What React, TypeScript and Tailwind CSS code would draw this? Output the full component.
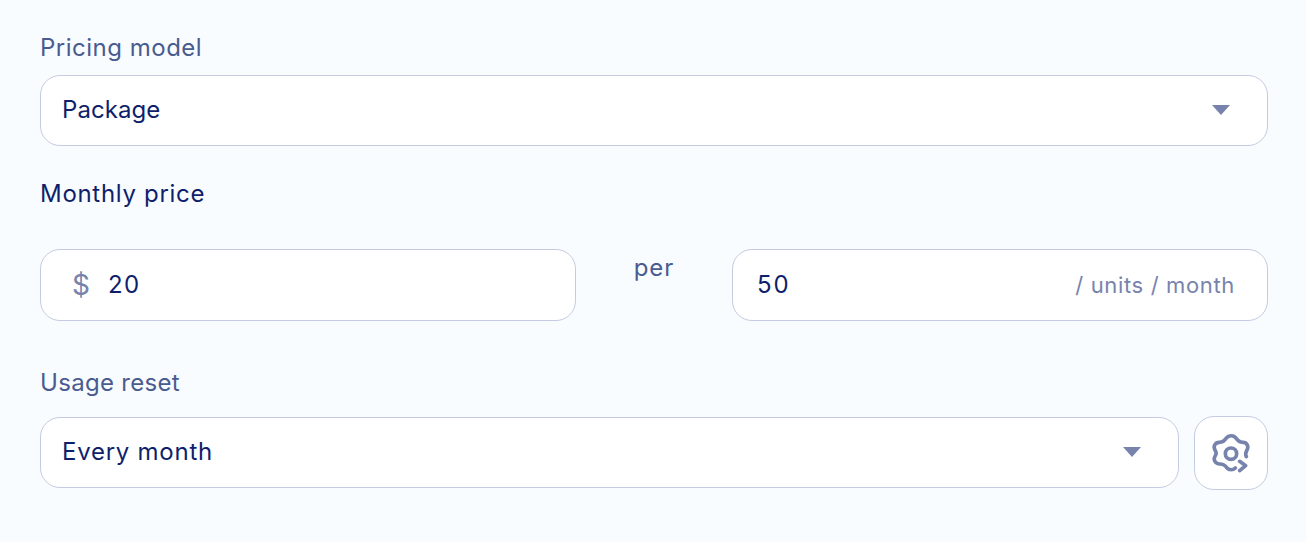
const font = "[font-family:Inter,'Liberation_Sans',sans-serif]"

const Caret = () => (
  <svg width="18" height="10" viewBox="0 0 18 10" className="shrink-0">
    <path d="M0 0H18L9 10Z" fill="#7783ad" />
  </svg>
)

const GearIcon = () => (
  <svg width="38.67" height="40" viewBox="95 85 116 120" fill="none" stroke="#7783ad" strokeWidth="11" strokeLinecap="round" strokeLinejoin="round">
    <path d="M165 190 C158 197 146 197 140 190 C135 182 128 178 118 178 C105 178 98 165 104 155 C108 150 110 145 104 136 C98 125 104 113 117 113 C128 113 133 108 138 100 C145 91 160 91 167 100 C172 108 177 113 188 113 C200 113 206 125 200 136 C195 145 195 150 198 156" />
    <circle cx="152" cy="147" r="17" />
    <path d="M178 170 L196 183 L178 198" />
  </svg>
)

const Box = ({ children, className }: { children: React.ReactNode; className: string }) => (
  <div className={`flex items-center rounded-[20px] border border-[#c5cbe2] bg-white ${className}`}>{children}</div>
)

export default function App() {
  return (
    <div className={`h-[542px] overflow-hidden bg-[#f8fcff] pl-10 pr-[38px] pt-[32px] text-[24px] leading-[32px] text-[#0f1f6b] ${font}`}>
      <div className="tracking-[0.5px] text-[#4a5b8f]">Pricing model</div>
      <Box className="mt-[11px] h-[71px] justify-between pb-[1px] pl-[21px] pr-[37px]">
        <span className="tracking-[0.05px]">Package</span>
        <Caret />
      </Box>
      <div className="mt-[32px] tracking-[0.7px]">Monthly price</div>
      <div className="mt-[39px] flex items-start">
        <Box className="h-[72px] w-[536px] pl-[31px]">
          <span className="w-[36px] text-[28px] text-[#7783ad]">$</span>
          <span className="tracking-[1.3px]">20</span>
        </Box>
        <div className="w-[156px] pt-[3px] text-center tracking-[1px] text-[#4a5b8f]">per</div>
        <Box className="h-[72px] w-[536px] justify-between pl-[24px] pr-[32px]">
          <span className="tracking-[1.8px]">50</span>
          <span className="text-[22px] tracking-[0.65px] text-[#7783ad]">/ units / month</span>
        </Box>
      </div>
      <div className="mt-[46px] tracking-[0.3px] text-[#4a5b8f]">Usage reset</div>
      <div className="mt-[17px] flex items-start gap-[15px]">
        <Box className="mt-[1px] h-[71px] flex-1 justify-between pb-[1px] pl-[21px] pr-[37px]">
          <span className="tracking-[0.75px]">Every month</span>
          <Caret />
        </Box>
        <Box className="h-[74px] w-[74px] shrink-0 justify-center">
          <GearIcon />
        </Box>
      </div>
    </div>
  )
}
